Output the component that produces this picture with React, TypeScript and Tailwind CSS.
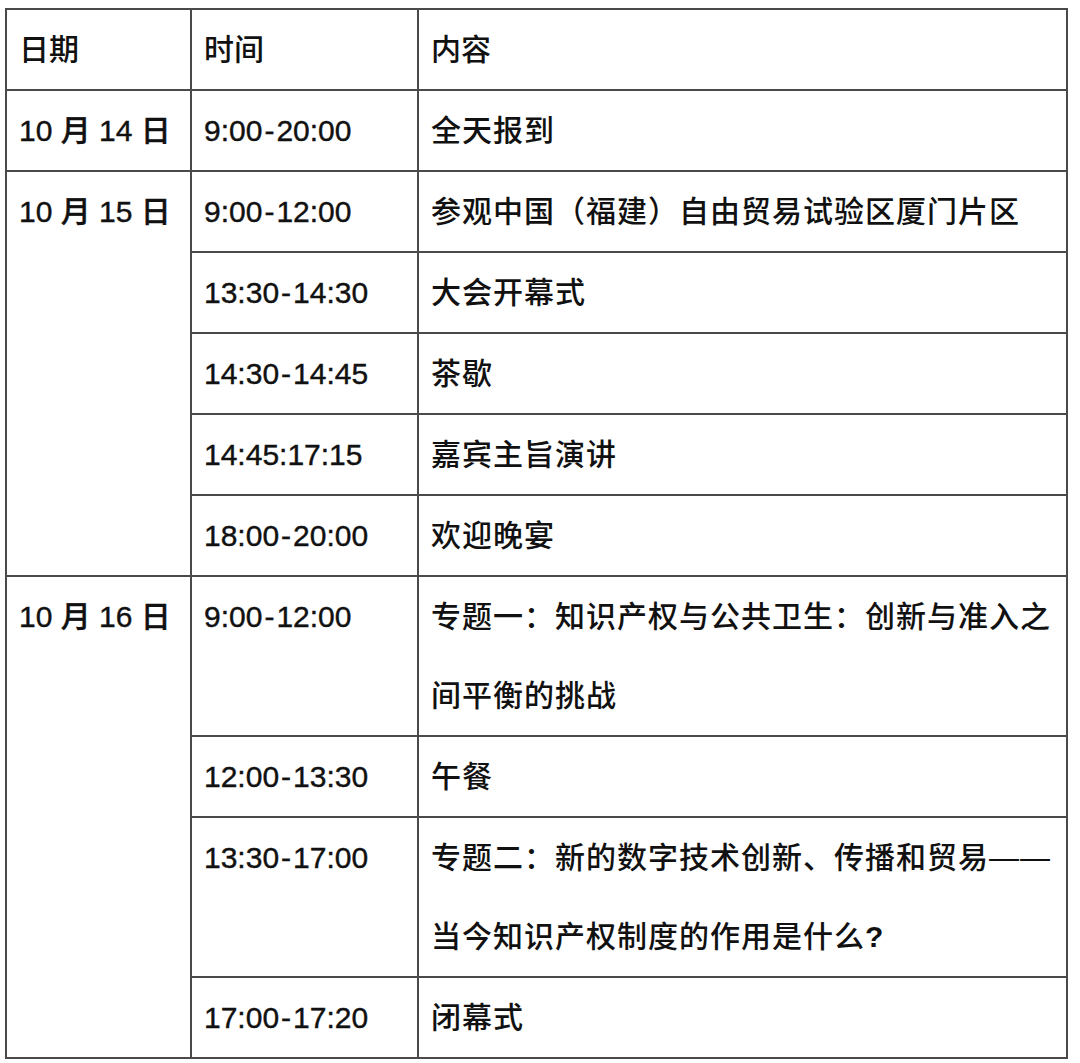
const font = { fontFamily: '"Liberation Sans", "Noto Sans CJK SC", sans-serif' }

type Row = { date?: string; span?: number; time: string; content: string[] }

const rows: Row[] = [
  { date: "10 月 14 日", span: 1, time: "9:00-20:00", content: ["全天报到"] },
  { date: "10 月 15 日", span: 5, time: "9:00-12:00", content: ["参观中国（福建）自由贸易试验区厦门片区"] },
  { time: "13:30-14:30", content: ["大会开幕式"] },
  { time: "14:30-14:45", content: ["茶歇"] },
  { time: "14:45:17:15", content: ["嘉宾主旨演讲"] },
  { time: "18:00-20:00", content: ["欢迎晚宴"] },
  { date: "10 月 16 日", span: 4, time: "9:00-12:00", content: ["专题一：知识产权与公共卫生：创新与准入之", "间平衡的挑战"] },
  { time: "12:00-13:30", content: ["午餐"] },
  { time: "13:30-17:00", content: ["专题二：新的数字技术创新、传播和贸易——", "当今知识产权制度的作用是什么?"] },
  { time: "17:00-17:20", content: ["闭幕式"] },
]

const cell = "border-2 border-[#4a4a4a] align-top pl-[12px] pr-0 py-0 leading-[79px] whitespace-nowrap font-medium"
const latin = "[-webkit-text-stroke:0.4px_#111]"

// 时间里的连字符两边留一点空
function Time({ value }: { value: string }) {
  const parts = value.split("-")
  return (
    <span className={latin}>
      {parts[0]}
      {parts.length > 1 && <span className="px-[2px]">-</span>}
      {parts[1]}
    </span>
  )
}

function Line({ text }: { text: string }) {
  if (text.endsWith("?")) {
    return (
      <div>
        {text.slice(0, -1)}
        <span className="font-bold">?</span>
      </div>
    )
  }
  return <div>{text}</div>
}

export default function App() {
  return (
    <div className="bg-white w-[1080px] h-[1063px] pt-[8px] pl-[5px] text-[30px] text-[#111]" style={font}>
      <table className="border-collapse table-fixed w-[1061px]">
        <colgroup>
          <col className="w-[185px]" />
          <col className="w-[227px]" />
          <col className="w-[649px]" />
        </colgroup>
        <thead>
          <tr>
            <th className={cell + " text-left"}>日期</th>
            <th className={cell + " text-left"}>时间</th>
            <th className={cell + " text-left"}>内容</th>
          </tr>
        </thead>
        <tbody>
          {rows.map((r, i) => (
            <tr key={i}>
              {r.date && (
                <td className={cell + " " + latin} rowSpan={r.span}>
                  {r.date}
                </td>
              )}
              <td className={cell}>
                <Time value={r.time} />
              </td>
              <td className={cell + " tracking-[1px]"}>
                {r.content.map((line, j) => (
                  <Line key={j} text={line} />
                ))}
              </td>
            </tr>
          ))}
        </tbody>
      </table>
    </div>
  )
}
